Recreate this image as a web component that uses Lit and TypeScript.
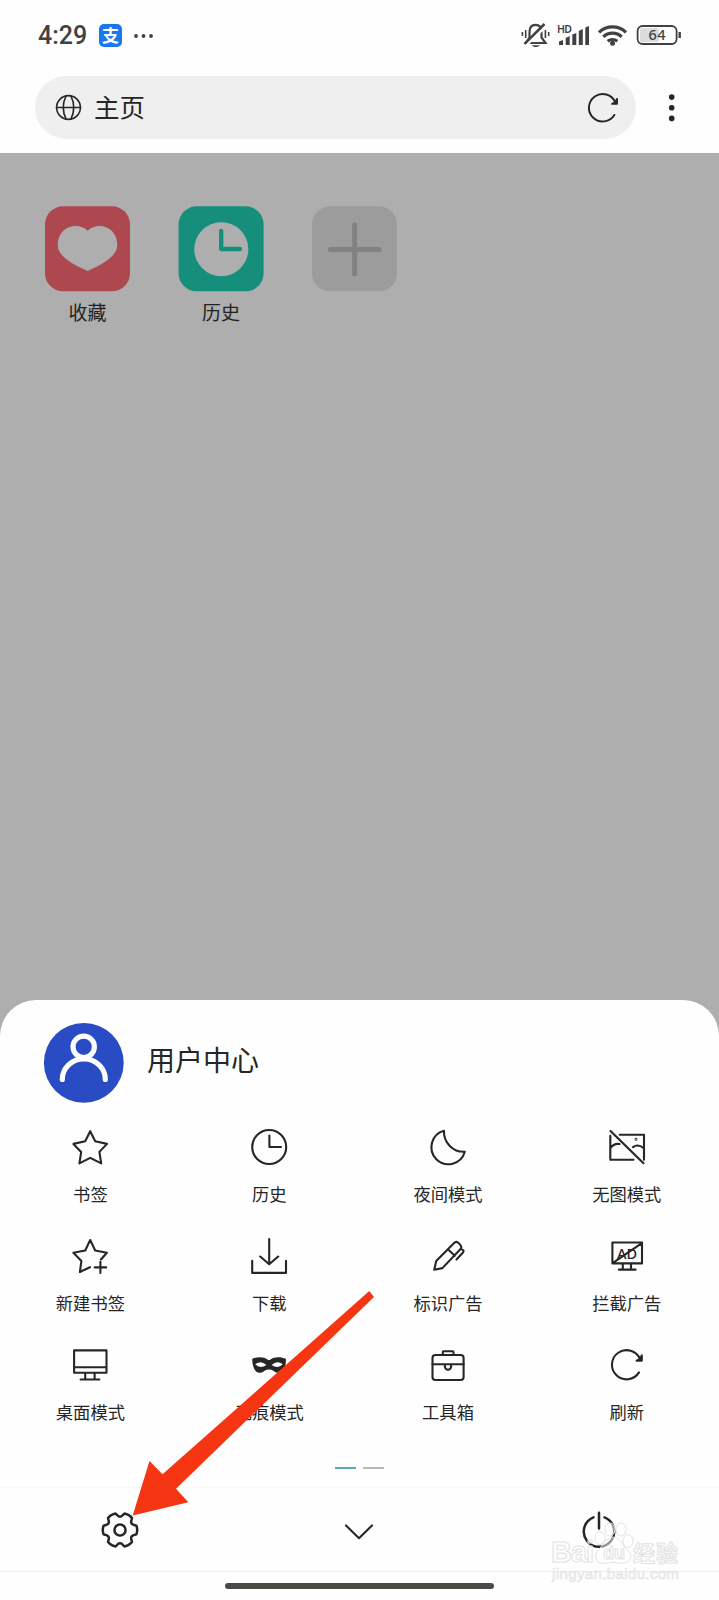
import { LitElement, html, css, svg } from "lit";
import { customElement } from "lit/decorators.js";

const RELOAD = svg`<path d="M12 7.4A14.6 14.6 0 1 1 13-6"/><path fill="#262626" d="M9.6-4.4H14.8V-9.6L13.2-6Z" stroke-width="2.1"/>`;

const ICONS: Record<string, unknown> = {
  star: svg`<path d="M.2-15.8L5.2-5.7L17-3.1L9.4 4.9L11.2 16.4L.2 10.9L-10.6 16.4L-8.8 4.9L-16.6-3.1L-4.8-5.7Z"/>`,
  clock: svg`<circle cx=".2" r="17"/><path d="M.4-11.5V0H12"/>`,
  moon: svg`<path d="M-4-16.2A17 17 0 1 0 16.8 4.8A20 20 0 0 1-4-16.2Z"/>`,
  noImage: svg`<path d="M-16.5-16L16.5 16.2M-16.7-11.3V12.7H6.5M-7.3-12.3H17V12.7M-16.5 1Q-13-4-7.5-3M6 .2Q11-3.5 16.5 1"/><circle cx="9" cy="-7.8" r=".4"/>`,
  starPlus: svg`<path d="M0 11.2L-10.1 16L-8.6 4.9L-16.6-3.2L-4.8-5.5L.2-16L5.2-5.5L16.9-3.2L10.9 3.5M10.4 5.8V17M4.7 11.4H16.2"/>`,
  download: svg`<path d="M.2-17V7.7M-8.8 .5L.2 8.2L9.2 .5M-16.8 4.9V16.9H17V4.9"/>`,
  pen: svg`<path d="M-13.7 13.7L-11.8 5L6.6-13.4Q8.6-15 10.8-12.8Q14.4-9.4 12.8-7.2L-5.6 12.1ZM.2-6.5L6.8-.2M13-6.8Q17-6.2 14.8-3.2L8.5 3.4"/>`,
  blockAd: svg`<path d="M-14.6-13.5H15V7.4H-14.6ZM-4.2 7.4V13.5M4 7.4V13.5M-8.2 13.6H8.6M14.5-12.6L-14 6.8"/><text class="ad" x="0" y="2.6">AD</text>`,
  desktop: svg`<path d="M-15.9-14.6H16.5V7.8H-15.9ZM-15.9 2.3H16.5M-4.8 7.8V14M4.6 7.8V14M-9.4 14.5H9.4"/>`,
  mask: svg`<path fill="#262626" fill-rule="evenodd" stroke="none" d="M-16.7-6.2C-12-8.4-5-8.4-1.5-5.6Q0-4.6 1.5-5.6C5-8.4 12-8.4 16.9-6.2C17.2 1 15.2 6 11 7.6C7 8.6 4.5 5.7 2.5 4.8Q0 4.2-2.5 4.8C-4.5 5.7-7 8.6-11 7.6C-15 6-17-.8-16.7-6.2ZM-13.8-.7Q-8-5-2.6 0Q-9 4.2-13.8-.7ZM13.8-.7Q8-5 2.6 0Q9 4.2 13.8-.7Z"/>`,
  toolbox: svg`<rect x="-15.5" y="-10" width="31.1" height="25" rx="3"/><path d="M-15.5-.8H15.6M-5.2-10V-13Q-5.2-13.8-4.4-13.8H4.7Q5.5-13.8 5.5-13V-10M-3.1-.8V1.6A3.1 3.1 0 0 0 3.1 1.6V-.8"/>`,
  reload: RELOAD,
};

const ENTRIES: [string, string][] = [
  ["star", "书签"], ["clock", "历史"], ["moon", "夜间模式"], ["noImage", "无图模式"],
  ["starPlus", "新建书签"], ["download", "下载"], ["pen", "标识广告"], ["blockAd", "拦截广告"],
  ["desktop", "桌面模式"], ["mask", "无痕模式"], ["toolbox", "工具箱"], ["reload", "刷新"],
];

function gearPath(): string {
  const at = (deg: number, r: number) => {
    const a = (deg * Math.PI) / 180;
    return `${(r * Math.cos(a)).toFixed(2)} ${(r * Math.sin(a)).toFixed(2)}`;
  };
  let d = `M${at(-15, 17)}`;
  for (let t = 0; t < 360; t += 60) {
    d += `Q${at(t, 18)} ${at(t + 15, 17)}L${at(t + 18, 15.6)}Q${at(t + 30, 11.4)} ${at(t + 42, 15.6)}L${at(t + 45, 17)}`;
  }
  return d + "Z";
}

@customElement("app-root")
export class AppRoot extends LitElement {
  static styles = css`
    :host {
      display: flex; flex-direction: column; position: relative;
      width: 719px; height: 1600px; overflow: hidden; background: #aeaeae; color: #262626;
      font-family: "Noto Sans CJK SC", sans-serif;
    }
    * { box-sizing: border-box; }
    svg { display: block; flex: none; overflow: visible; }
    .line { fill: none; stroke: #262626; stroke-width: 2.1; stroke-linejoin: round; stroke-linecap: round; }
    .thin { stroke-width: 1.6; }
    .top { height: 153px; background: #fefefe; flex: none; }
    .status { height: 76px; padding: 0 38px; display: flex; align-items: center; color: #414141; }
    .time { font: 500 25px/70px Roboto, sans-serif; width: 61px; height: 70px; margin-top: -5px; white-space: nowrap; }
    .pay { width: 23px; height: 23px; border-radius: 5px; background: #1a78ee; color: #fff;
      font-size: 17px; font-weight: 700; line-height: 22px; text-align: center; margin-top: -5px; }
    .more { margin: -5px 0 0 12px; }
    .signals { margin: -6px 0 0 auto; }
    .hd { font: 600 10.5px "Noto Sans", sans-serif; fill: #414141; }
    .pct { font: 500 14.5px "Noto Sans", sans-serif; fill: #414141; text-anchor: middle; }
    .address { display: flex; align-items: center; padding-left: 35px; }
    .pill { width: 601px; height: 63px; border-radius: 32px; background: #efefef; display: flex; align-items: center; padding: 0 16px 0 21px; }
    .title { font-size: 25.5px; line-height: 60px; margin: -4px auto 0 13px; }
    .kebab { margin-left: 24.5px; }
    .speed { flex: 1; display: flex; gap: 48.5px; padding: 53px 0 0 45px; align-items: flex-start; }
    .tile { width: 85px; font-size: 19px; line-height: 26px; text-align: center; color: #222; }
    .tile svg { margin-bottom: 8px; }
    .sheet { height: 600px; flex: none; background: #fefefe; border-radius: 36px 36px 0 0; display: flex; flex-direction: column; }
    .user { display: flex; align-items: center; gap: 23px; padding: 23px 0 0 44px; height: 103px; font-size: 28px; }
    .name { line-height: 40px; margin-top: -8px; }
    .grid { display: grid; grid-template-columns: repeat(4, 178.8px); grid-auto-rows: 109.2px; padding: 24px 0 0 1px; }
    .cell { display: flex; flex-direction: column; align-items: center; font-size: 17.3px; line-height: 26px; gap: 14px; white-space: nowrap; }
    .ad { font: 500 14.5px "Noto Sans", sans-serif; text-anchor: middle; fill: #262626; stroke: none; }
    .pager { display: flex; gap: 7px; justify-content: center; height: 33px; padding-top: 12px; margin-bottom: auto; }
    .pager i { width: 21px; height: 2px; background: #b9b9b9; }
    .pager i.on { background: #5aa7b6; }
    .bar { height: 85px; flex: none; display: grid; grid-template-columns: repeat(3, 239.67px); place-items: center; border-top: 1px solid #f9f9f9; border-bottom: 1px solid #eee; }
    .home { height: 28px; flex: none; display: flex; justify-content: center; padding-top: 11px; }
    .home i { width: 269px; height: 6px; border-radius: 3px; background: #4a4a47; }
    .overlay { position: absolute; left: 0; top: 0; }
    .wm { fill: #fff; fill-opacity: .5; stroke: #e2e2e2; stroke-width: 1; }
    .brand { font: 700 29px "Liberation Sans", sans-serif; }
    .small { font: 700 18px "Liberation Sans", sans-serif; }
    .cn { font: 700 22px "Noto Sans CJK SC", sans-serif; }
    .url { font: 15px "Liberation Sans", sans-serif; stroke-width: .7; }
  `;

  render() {
    return html`
      <header class="top">
        <div class="status">
          <span class="time">4:29</span>
          <span class="pay">支</span>
          <svg class="more" width="20" height="6" fill="#414141"><circle cx="2" cy="3" r="1.9"/><circle cx="9.5" cy="3" r="1.9"/><circle cx="17" cy="3" r="1.9"/></svg>
          <svg class="signals" width="161" height="26" viewBox="520 22 161 26">
            <g fill="none" stroke="#414141" stroke-width="2.2">
              <path d="M526 43H545.5L541.5 37.5V32Q541.5 24.8 535.5 24.8Q529.5 24.8 529.5 32V37.5Z" />
              <path fill="#414141" stroke="none" d="M531.5 45.2H540Q535.7 49 531.5 45.2Z"/>
              <path stroke="#fefefe" stroke-width="2.6" d="M527 44.5L546.5 25.5"/>
              <path stroke-width="2.5" d="M524.5 43.8L544.5 24"/>
              <path stroke-width="1.6" d="M522.4 32V36M525.7 30V38M545.4 30V38M548.7 32V36"/>
            </g>
            <text class="hd" x="557" y="32.7" textLength="15">HD</text>
            <path fill="#414141" d="M559 41.5L563 40V45H559ZM565.7 38L569.7 36V45H565.7ZM572.3 34.5L576.3 33V45H572.3ZM578.8 31L582.8 29V45H578.8ZM585.3 27.5L589 26V45H585.3Z"/>
            <g fill="none" stroke="#414141" stroke-width="3.2">
              <path d="M599 32.3A19.5 19.5 0 0 1 626 32.3M603.3 36.9A13.3 13.3 0 0 1 621.7 36.9M607.7 41.2A7.8 7.8 0 0 1 617.3 41.2"/>
            </g>
            <circle cx="612.5" cy="43.2" r="2.5" fill="#414141"/>
            <rect x="640" y="28" width="19" height="14" rx="2" fill="#dcdcdc"/>
            <rect x="637.6" y="26" width="39" height="18" rx="5" fill="none" stroke="#414141" stroke-width="1.8"/>
            <path d="M679.7 32V38" stroke="#414141" stroke-width="2.4"/>
            <text class="pct" x="657" y="40.4" textLength="17">64</text>
          </svg>
        </div>
        <div class="address">
          <div class="pill">
            <svg class="line thin" width="25" height="25" viewBox="-12.5 -12.5 25 25"><circle r="11.9"/><path d="M-12 0H12M-2.5-11.5Q-8 0-2.5 11.5M2.5-11.5Q8 0 2.5 11.5"/></svg>
            <span class="title">主页</span>
            <svg class="line" width="32" height="32" viewBox="-16 -17 34 34">${RELOAD}</svg>
          </div>
          <svg class="kebab" width="22" height="32" fill="#262626"><circle cx="10.7" cy="5.1" r="2.8"/><circle cx="10.7" cy="15.8" r="2.8"/><circle cx="10.7" cy="26.4" r="2.8"/></svg>
        </div>
      </header>

      <main class="speed">
        <div class="tile">
          <svg width="85" height="85"><rect y=".3" width="85" height="85" rx="18" fill="#ad484f"/><path fill="#aeaeae" d="M42.7 24.7C32 15 12.7 21 12.7 39C12.7 50 27 58 42.7 65C58 58 72.3 50 72.3 39C72.3 21 53 15 42.7 24.7Z"/></svg>
          收藏
        </div>
        <div class="tile">
          <svg width="85" height="85"><rect x="-.4" y=".3" width="85" height="85" rx="18" fill="#158f7b"/><circle cx="42.3" cy="43.2" r="27" fill="#aeaeae"/><path d="M42.2 25V43H61" fill="none" stroke="#158f7b" stroke-width="4.3" stroke-linecap="round" stroke-linejoin="round"/></svg>
          历史
        </div>
        <div class="tile">
          <svg width="85" height="85"><rect y=".3" width="85" height="85" rx="18" fill="#9c9c9c"/><path d="M42.7 18.9V67.7M18.5 43.4H67" stroke="#818181" stroke-width="5" stroke-linecap="round"/></svg>
        </div>
      </main>

      <section class="sheet">
        <div class="user">
          <svg width="80" height="80" viewBox="-40 -40 80 80"><circle cx="-.2" cy="-.2" r="39.9" fill="#294bc4"/><g fill="none" stroke="#fcfdff" stroke-width="5.2" stroke-linecap="round"><circle cx="-.3" cy="-16.2" r="10.7"/><path d="M-21.7 16.4A21.5 20.5 0 0 1 21.3 16.4"/></g></svg>
          <span class="name">用户中心</span>
        </div>
        <div class="grid">
          ${ENTRIES.map(([icon, label]) => html`
            <div class="cell">
              <svg class="line" width="40" height="40" viewBox="-20 -20 40 40">${ICONS[icon]}</svg>
              <span>${label}</span>
            </div>`)}
        </div>
        <div class="pager"><i class="on"></i><i></i></div>
        <nav class="bar">
          <svg class="line" width="40" height="40" viewBox="-20 -20 40 40"><g stroke-width="2.5"><path d="${gearPath()}"/><circle r="5.6"/></g></svg>
          <svg class="line" width="40" height="40" viewBox="-20 -20 40 40"><path d="M-13-4.6L0 8.2L13-4.6"/></svg>
          <svg class="line" width="40" height="40" viewBox="-20 -20 40 40"><path stroke-width="2.5" d="M-5.5-12.6A15.2 15.2 0 1 0 5.5-12.6M0-17.2V-1.5"/></svg>
        </nav>
        <div class="home"><i></i></div>
      </section>

      <svg class="overlay" width="719" height="1600">
        <path fill="#f63513" d="M132.7 1515.5L149.5 1461L162.5 1474.3L369.3 1291L374 1297L176 1488.7L188.3 1502.3Z"/>
        <g class="wm">
          <ellipse cx="600" cy="1538" rx="5" ry="6.5"/><ellipse cx="610" cy="1529.5" rx="5" ry="6.5"/><ellipse cx="621" cy="1529.5" rx="5" ry="6.5"/><ellipse cx="628" cy="1541" rx="5" ry="6.5"/>
          <path d="M613 1537Q620 1538 624 1547Q635 1555 629 1561Q623 1565 613 1562Q603 1565 598 1562Q592 1555 601 1547Q606 1538 613 1537Z"/>
          <text class="brand" x="551" y="1562" textLength="43">Bai</text>
          <text class="small" x="603" y="1559">du</text>
          <text class="cn" x="633" y="1561" textLength="45">经验</text>
          <text class="url" x="552" y="1579" textLength="127">jingyan.baidu.com</text>
        </g>
      </svg>
    `;
  }
}
